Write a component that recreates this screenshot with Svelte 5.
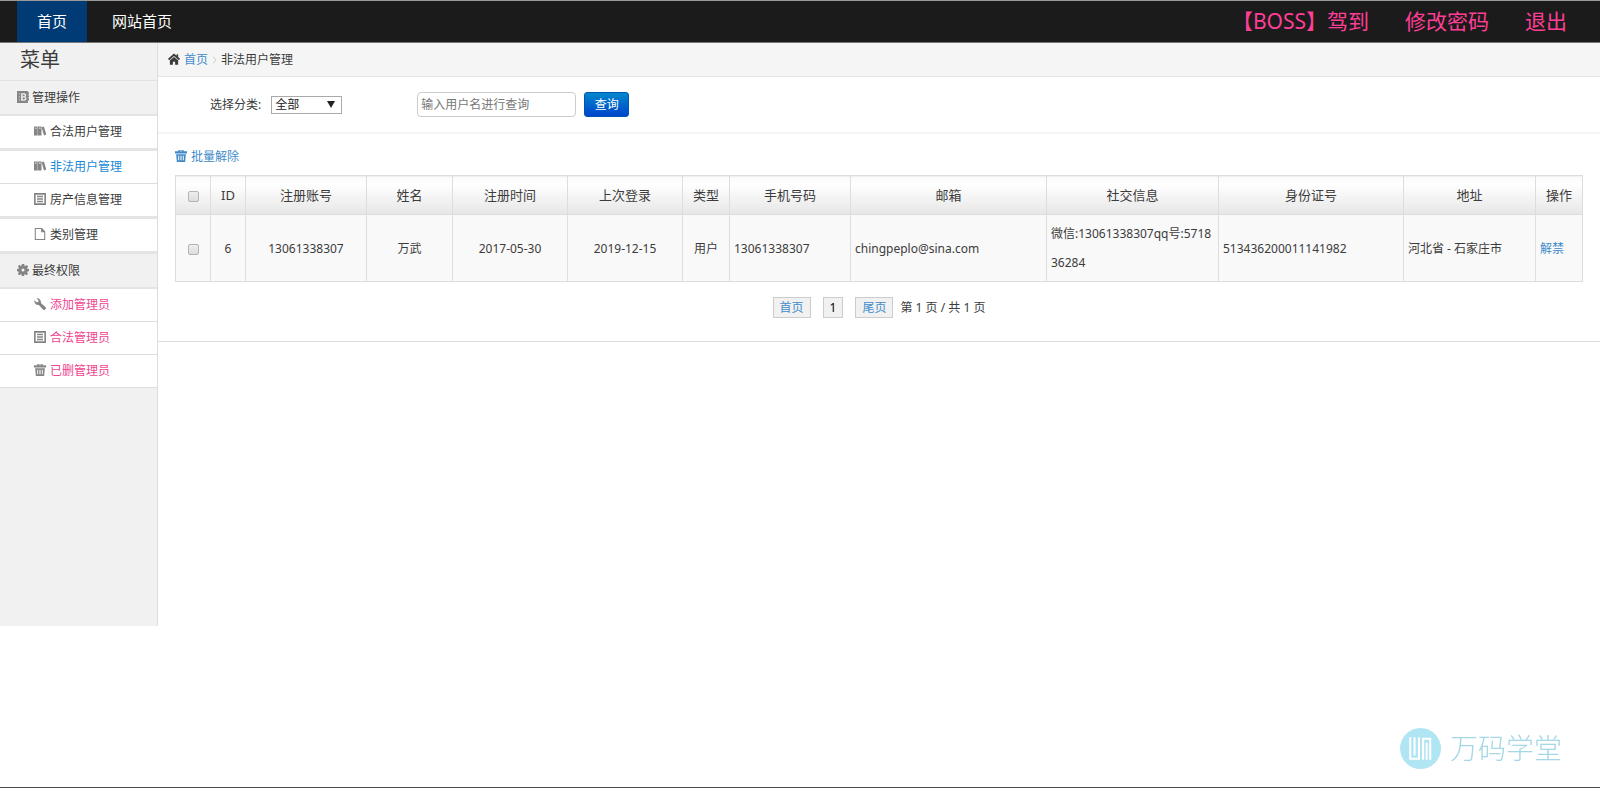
<script>
  const menu = [
    {
      title: "管理操作",
      icon: "book",
      items: [
        { text: "合法用户管理", icon: "books", wide: true },
        { text: "非法用户管理", icon: "books", active: true },
        { text: "房产信息管理", icon: "list", wide: true },
        { text: "类别管理", icon: "file", wide: true },
      ],
    },
    {
      title: "最终权限",
      icon: "cog",
      admin: true,
      items: [
        { text: "添加管理员", icon: "wrench" },
        { text: "合法管理员", icon: "list" },
        { text: "已删管理员", icon: "trash" },
      ],
    },
  ];

  // relative column widths, the table stretches them
  const columns = [
    { key: "id", title: "ID", width: 35, center: true },
    { key: "account", title: "注册账号", width: 121, center: true },
    { key: "name", title: "姓名", width: 86, center: true },
    { key: "created", title: "注册时间", width: 115, center: true },
    { key: "lastLogin", title: "上次登录", width: 115, center: true },
    { key: "type", title: "类型", width: 47, center: true },
    { key: "phone", title: "手机号码", width: 121 },
    { key: "email", title: "邮箱", width: 196 },
    { key: "social", title: "社交信息", width: 172 },
    { key: "idCard", title: "身份证号", width: 185 },
    { key: "address", title: "地址", width: 132 },
  ];

  const users = [
    {
      id: 6,
      account: "13061338307",
      name: "万武",
      created: "2017-05-30",
      lastLogin: "2019-12-15",
      type: "用户",
      phone: "13061338307",
      email: "chingpeplo@sina.com",
      social: "微信:13061338307qq号:571836284",
      idCard: "513436200011141982",
      address: "河北省 - 石家庄市",
    },
  ];

  let selected = $state([]);
  let category = $state("全部");
  let keyword = $state("");

  function toggleAll(e) {
    selected = e.target.checked ? users.map((u) => u.id) : [];
  }
</script>

{#snippet icon(name)}
  <svg class="icon" viewBox="0 0 16 16" aria-hidden="true">
    {#if name === "home"}
      <path d="M8 .5 0 7.500l1.400 2L8 4l6.600 5.500 1.400-2-2.500-2.200V1.500h-2v2z" />
      <path d="M8 5.200 2.500 9.800V15.500H6.500v-4h3v4h4V9.800z" />
    {:else if name === "book"}
      <path fill-rule="evenodd" d="M0 0h14.500v1.500H16v3h-1.500v1H16v3h-1.500v1H16v3h-1.500V16H0zM2.500 3v1.500h1V3zM2.500 7v1.500h1V7zM2.500 11v1.500h1V11zM5.500 3v10h4c3.800 0 3.800-4.300 1.500-5 2-1.300 1.500-5-1.500-5zM7.500 4.800h1.700c1.500 0 1.500 2.200 0 2.200H7.500zM7.500 8.800h2c1.700 0 1.700 2.400 0 2.400h-2z" />
    {:else if name === "books"}
      <path fill-rule="evenodd" d="M0 2h4.800v12H0zm1.200 1.800v1h2.400v-1zM5.200 2H10v12H5.200zm1.200 1.800v1h2.400v-1zM10.200 3l3-1L16.500 13l-3.200 1z" />
    {:else if name === "list"}
      <path fill-rule="evenodd" d="M0 0h16v16H0zM2.200 2.200v11.600h11.600V2.200zM4 3.800h8v1.800H4zM4 7.100h8v1.800H4zM4 10.400h8v1.800H4z" />
    {:else if name === "file"}
      <path fill-rule="evenodd" d="M1 0h9.800L15 4.500V16H1zM2.400 1.400v13.200h11.200V5.800H9.500V1.400z" />
    {:else if name === "cog"}
      <path
        fill-rule="evenodd"
        d="M6.400 0h3.200l.4 2.300 1 .4 1.900-1.400 2 2-1.400 1.900.5 1.200 2 .3v2.900l-2.200.4-.4 1 1.300 1.900-2 2-1.900-1.300-1 .4-.4 2H6.400l-.4-2-1-.4-1.900 1.300-2-2L2.400 11 2 10 0 9.600V6.500l2-.3.500-1.200-1.300-1.900 2-2L5 2.600l1-.3zM8 6a2 2 0 1 0 0 4 2 2 0 0 0 0-4z"
      />
    {:else if name === "wrench"}
      <path d="M15.600 12.200 9.200 6.600C9.800 3 7.300-.200 3.300.300l2.800 2.900-.4 2.100-2.300.5L.4 3C0 7.300 3.200 9.900 6.500 9.200l5.700 6.400c2 1.500 4.800-1.500 3.400-3.400z" />
    {:else if name === "trash"}
      <path fill-rule="evenodd" d="M4.500 1.500V0h7v1.500H16v3H0v-3zm1.800 0h3.400v-.7H6.300zM1.500 5.500h13L13.500 16h-11zM4.300 7.500v6h1.300v-6zm3 0v6h1.400v-6zm3.100 0v6h1.300v-6z" />
    {/if}
  </svg>
{/snippet}

<header class="topbar">
  <nav class="tabs">
    <a class="active" href="#index">首页</a>
    <a href="#site">网站首页</a>
  </nav>
  <nav class="account">
    <a href="#boss">【BOSS】驾到</a>
    <a href="#password">修改密码</a>
    <a href="#logout">退出</a>
  </nav>
</header>

<div class="container">
  <aside class="sidebar">
    <h1>菜单</h1>
    {#each menu as group}
      <h2>{@render icon(group.icon)}{group.title}</h2>
      <ul class:admin={group.admin}>
        {#each group.items as item}
          <li class:wide={item.wide}>
            <a class:active={item.active} href="#menu">{@render icon(item.icon)}{item.text}</a>
          </li>
        {/each}
      </ul>
    {/each}
  </aside>

  <main>
    <div class="crumb">
      {@render icon("home")}
      <a href="#index">首页</a>
      <svg class="arrow" viewBox="0 0 5 8" aria-hidden="true"><path d="M1 0.500 4 4 1 7.500" /></svg>
      <span>非法用户管理</span>
    </div>

    <form class="search" onsubmit={(e) => e.preventDefault()}>
      <label for="category">选择分类:</label>
      <span class="select">
        <select id="category" bind:value={category}>
          <option>全部</option>
        </select>
      </span>
      <input type="text" aria-label="用户名" placeholder="输入用户名进行查询" bind:value={keyword} />
      <button type="submit">查询</button>
    </form>

    <section class="result">
      <a class="batch" href="#batch">{@render icon("trash")}批量解除</a>

      <table>
        <colgroup>
          <col style="width: 35px" />
          {#each columns as col}
            <col style="width: {col.width}px" />
          {/each}
          <col style="width: 47px" />
        </colgroup>
        <thead>
          <tr>
            <th><input type="checkbox" aria-label="全选" onchange={toggleAll} /></th>
            {#each columns as col}
              <th>{col.title}</th>
            {/each}
            <th>操作</th>
          </tr>
        </thead>
        <tbody>
          {#each users as user}
            <tr>
              <td class="center">
                <input type="checkbox" aria-label={user.name} value={user.id} bind:group={selected} />
              </td>
              {#each columns as col}
                <td class:center={col.center}>{user[col.key]}</td>
              {/each}
              <td><a href="#release">解禁</a></td>
            </tr>
          {/each}
        </tbody>
      </table>

      <nav class="pages">
        <a href="#first">首页</a>
        <span class="current">1</span>
        <a href="#last">尾页</a>
        <span>第 1 页 / 共 1 页</span>
      </nav>
    </section>
  </main>
</div>

<div class="brand">
  <svg viewBox="0 0 40 40" aria-hidden="true">
    <circle cx="20" cy="20" r="20" />
    <path d="M10 9v21h8.500V9M14.200 9v17.500M22.500 31V10.500h7V31M26 14.500V31" />
  </svg>
  <span>万码学堂</span>
</div>

<style>
  :global(body) {
    min-height: 100vh;
    box-sizing: border-box;
    border-bottom: 1px solid #4a4c52;
    background: #fff;
    color: #3c3c3c;
    font: 12px/20px "Noto Sans", "Noto Sans CJK SC", sans-serif;
  }
  a {
    color: #428bca;
    text-decoration: none;
  }
  .icon {
    width: 12px;
    height: 12px;
    flex: none;
    margin-bottom: 2px;
    fill: currentColor;
  }

  .topbar {
    display: flex;
    justify-content: space-between;
    height: 41px;
    padding: 0 15px 0 17px;
    border-top: 1px solid #999;
    border-bottom: 1px solid #777;
    background: #1b1b1b;
  }
  .tabs,
  .account {
    display: flex;
    line-height: 41px;
  }
  .tabs {
    gap: 5px;
  }
  .tabs a {
    padding: 0 20px;
    color: #fff;
    font-size: 15px;
  }
  .tabs a.active {
    background: #003b75;
  }
  .account a {
    padding: 0 18px;
    color: #ff3e96;
    font-size: 21px;
  }

  .container {
    display: flex;
    align-items: flex-start;
  }
  .sidebar {
    width: 157px;
    flex: none;
    min-height: 583px;
    border-right: 1px solid #ddd;
    background: #f1f1f1;
  }
  h1,
  h2,
  ul {
    margin: 0;
    padding: 0;
    font-weight: normal;
  }
  h1 {
    padding: 0 0 3px 20px;
    border-bottom: 1px solid #e2e2e2;
    font-size: 20px;
    line-height: 34px;
  }
  h2,
  li a {
    display: flex;
    align-items: center;
    gap: 4px;
    font-size: 12px;
    line-height: 32px;
  }
  h2 {
    gap: 3px;
    padding-left: 17px;
    border-bottom: 2px solid #e4e4e4;
    line-height: 33px;
  }
  h2 .icon,
  li .icon {
    color: #858585;
  }
  ul {
    list-style: none;
  }
  li {
    border-bottom: 1px solid #ddd;
    background: #fff;
  }
  li.wide {
    border-bottom: 3px solid #e4e4e4;
  }
  li a {
    padding-left: 34px;
    color: #3c3c3c;
  }
  li a.active {
    color: #1a8ad4;
  }
  .admin a {
    color: #ee4590;
  }

  main {
    flex: 1;
    min-width: 0;
    border-bottom: 1px solid #ddd;
  }
  .crumb {
    display: flex;
    align-items: center;
    gap: 4px;
    height: 33px;
    padding-left: 10px;
    border-bottom: 1px solid #e5e5e5;
    background: #f5f5f5;
  }
  .arrow {
    width: 5px;
    height: 8px;
    fill: none;
    stroke: #ccc;
  }
  .search {
    display: flex;
    align-items: center;
    height: 55px;
    padding-left: 52px;
    border-bottom: 2px solid #f5f5f5;
  }
  .select {
    position: relative;
    margin: 0 75px 0 10px;
  }
  .select::after {
    position: absolute;
    top: 5px;
    right: 7px;
    border: 4px solid transparent;
    border-top: 7px solid #222;
    border-bottom: 0;
    content: "";
    pointer-events: none;
  }
  select {
    display: block;
    width: 71px;
    height: 18px;
    padding: 0 3px;
    border: 1px solid #aaa;
    border-radius: 0;
    appearance: none;
    background: #fff;
    color: #222;
    font: inherit;
    line-height: 16px;
  }
  .search input {
    width: 159px;
    height: 25px;
    box-sizing: border-box;
    margin-right: 8px;
    padding: 0 3px;
    border: 1px solid #ccc;
    border-radius: 4px;
    font: inherit;
  }
  .search input::placeholder {
    color: #777;
  }
  .search button {
    width: 45px;
    height: 25px;
    padding: 0;
    border: 1px solid #0055b3;
    border-radius: 3px;
    background: linear-gradient(#0088cc, #0044cc);
    color: #fff;
    font: inherit;
  }

  .result {
    padding: 13px 17px 23px;
  }
  .batch {
    display: inline-flex;
    align-items: center;
    gap: 4px;
    margin-bottom: 8px;
  }
  table {
    width: 100%;
    table-layout: fixed;
    border-collapse: collapse;
    background: #f9f9f9;
  }
  th,
  td {
    padding: 4px;
    border: 1px solid #ddd;
    line-height: 29px;
    text-align: left;
    word-break: break-all;
  }
  th {
    background: linear-gradient(#f9f9f9, #fff 20%, #e6e6e6);
    font-size: 13px;
    font-weight: normal;
    line-height: 30px;
    text-align: center;
  }
  .center {
    text-align: center;
  }
  input[type="checkbox"] {
    width: 11px;
    height: 11px;
    margin: 0;
    border: 1px solid #b5b5b5;
    border-radius: 2px;
    appearance: none;
    background: linear-gradient(#eee, #ddd);
    vertical-align: middle;
  }
  input[type="checkbox"]:checked {
    background: #428bca;
  }
  .pages {
    display: flex;
    justify-content: center;
    align-items: center;
    margin-top: 15px;
  }
  .pages a,
  .current {
    margin-right: 12px;
    padding: 0 6px;
    border: 1px solid #ccc;
    background: #f1f1f1;
    line-height: 19px;
  }
  .pages a:last-of-type {
    margin-right: 7px;
  }
  .current {
    color: #000;
  }

  .brand {
    position: fixed;
    right: 38px;
    bottom: 19px;
    display: flex;
    align-items: center;
    gap: 9px;
    color: #a5d8e6;
    font-size: 28px;
    font-weight: 300;
    line-height: 42px;
  }
  .brand svg {
    width: 41px;
    height: 41px;
  }
  .brand circle {
    fill: #b0e5f3;
  }
  .brand path {
    fill: none;
    stroke: #fff;
    stroke-width: 2;
  }
</style>
